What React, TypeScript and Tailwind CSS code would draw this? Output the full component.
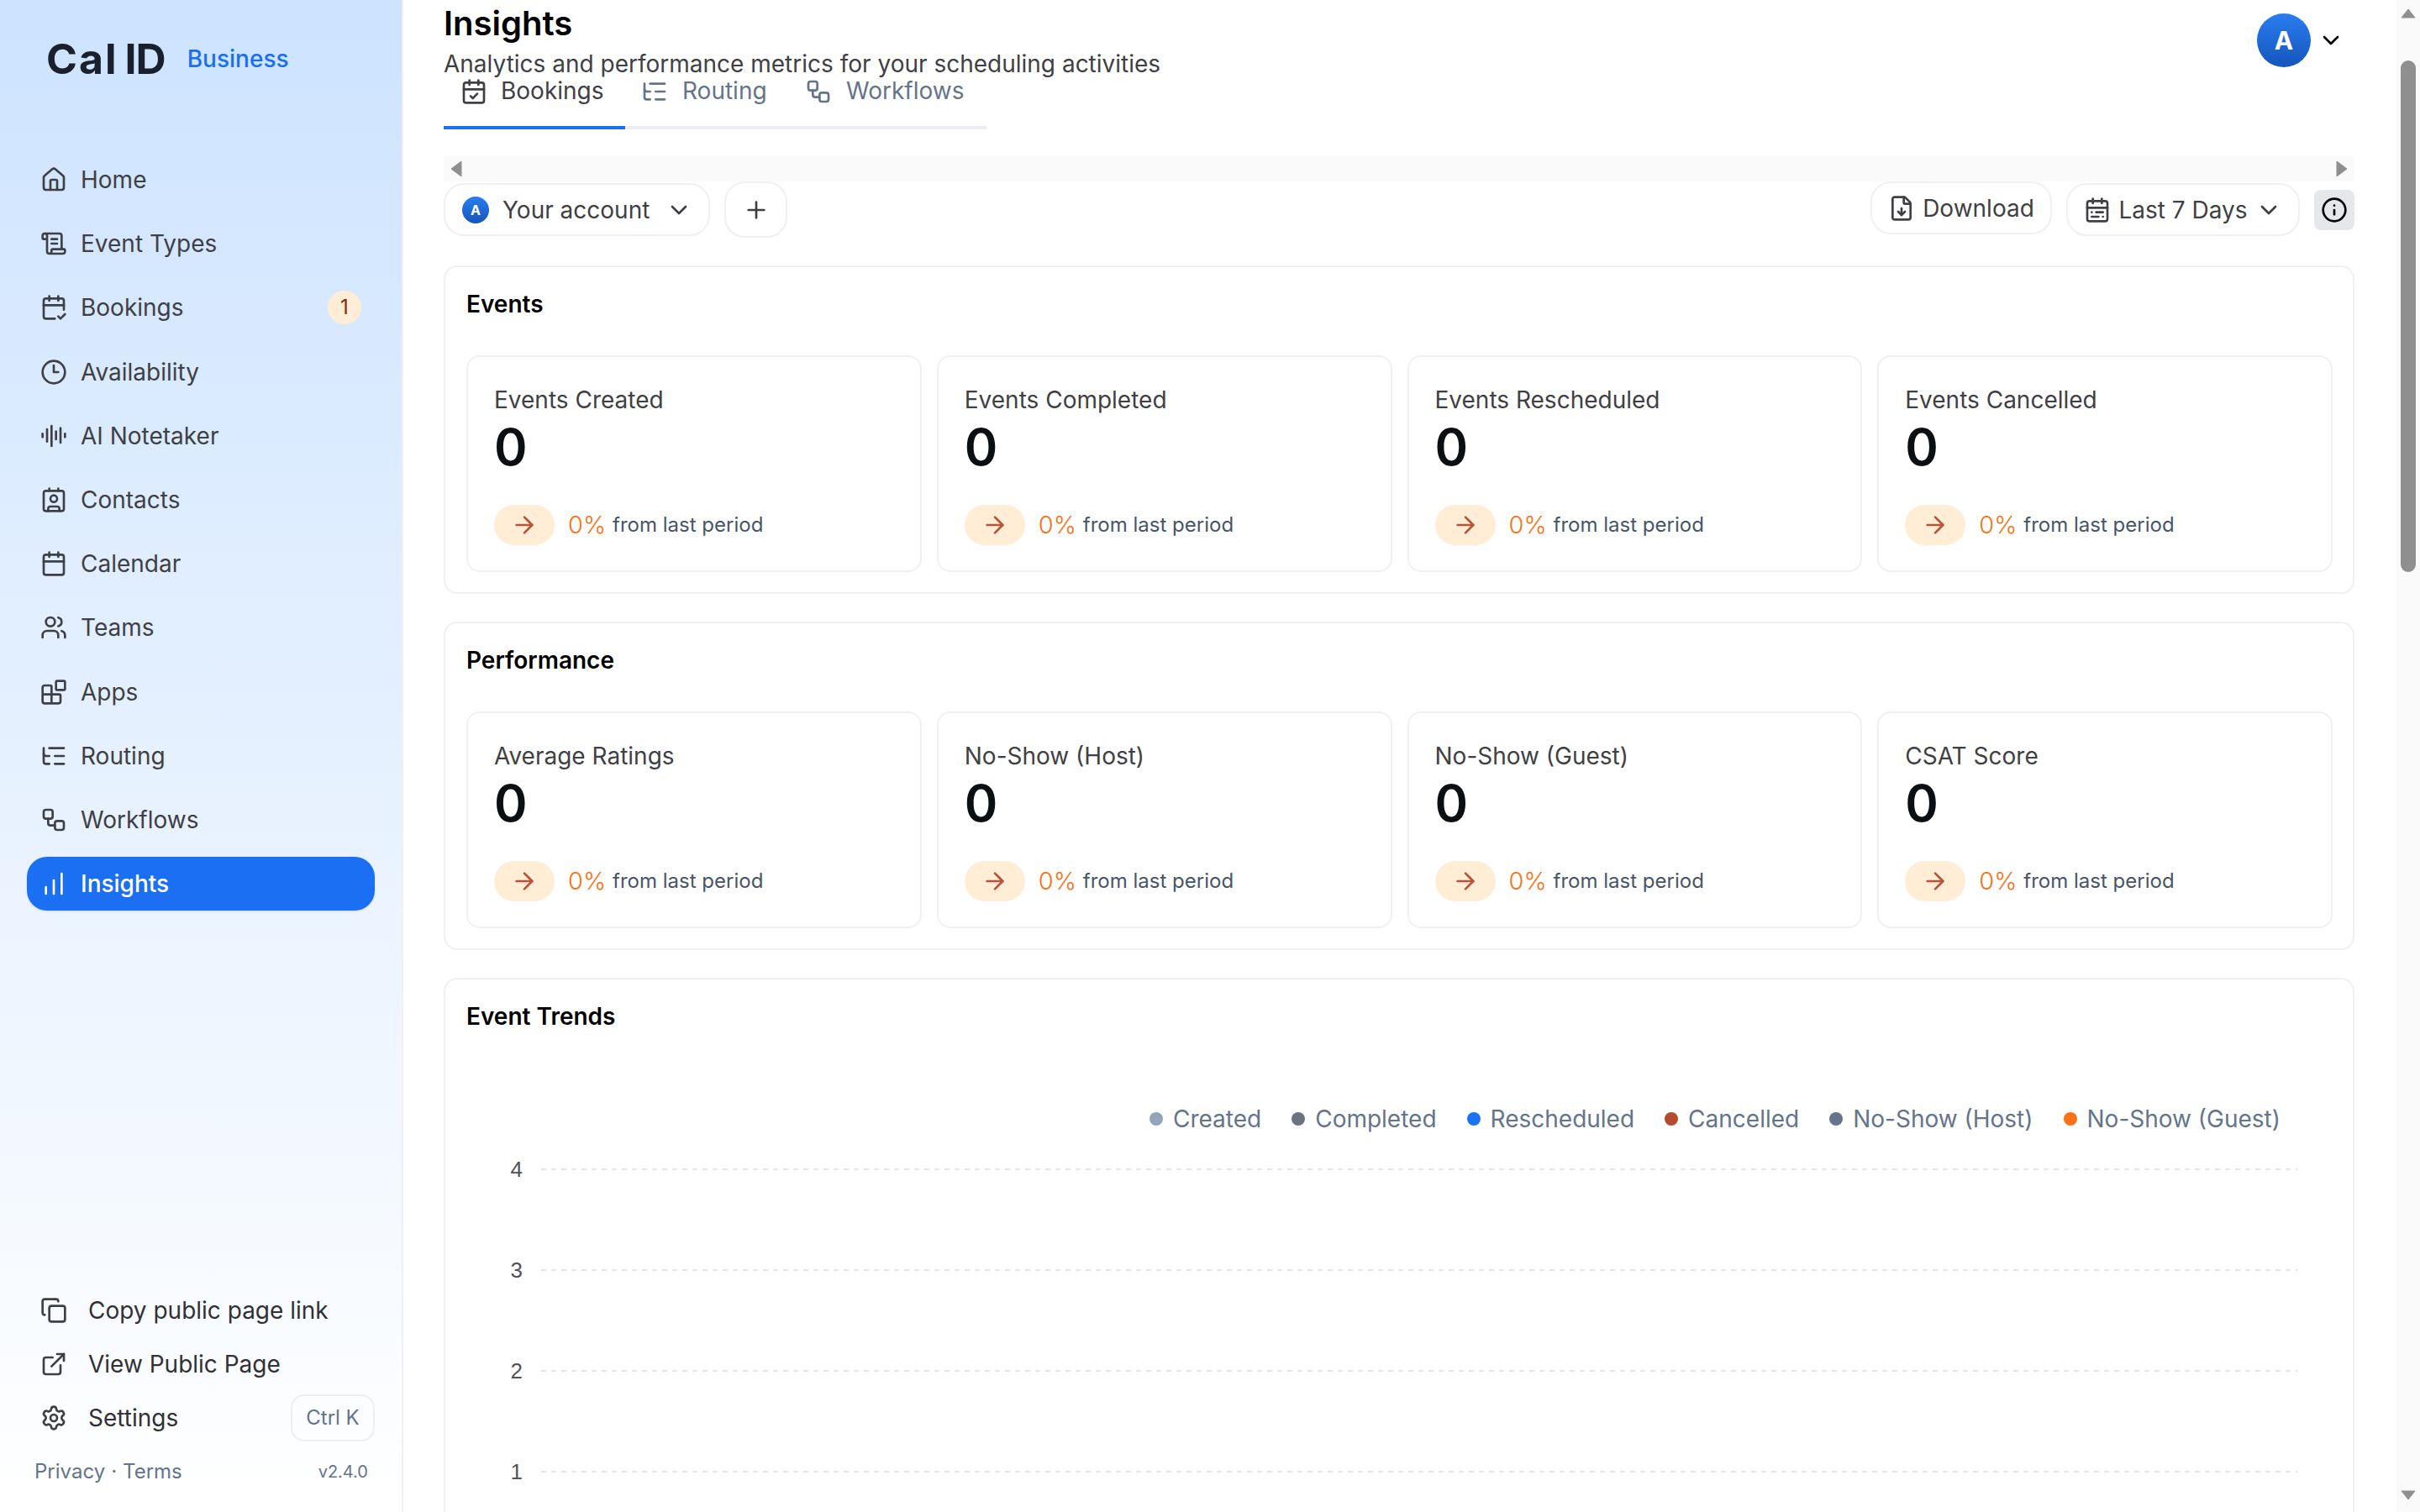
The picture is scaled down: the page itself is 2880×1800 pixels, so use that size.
import React from 'react';
import {
  ArrowRight,
  AudioLines,
  Blocks,
  Calendar,
  CalendarCheck,
  CalendarCheck2,
  CalendarRange,
  ChartNoAxesColumnIncreasing,
  ChevronDown,
  Clock3,
  Contact,
  Copy,
  ExternalLink,
  FileDown,
  House,
  Info,
  ListTree,
  Plus,
  ScrollText,
  Settings,
  Users,
  Workflow,
} from 'lucide-react';

const navItems = [
  { label: 'Home', icon: House },
  { label: 'Event Types', icon: ScrollText },
  { label: 'Bookings', icon: CalendarCheck2, badge: '1' },
  { label: 'Availability', icon: Clock3 },
  { label: 'AI Notetaker', icon: AudioLines },
  { label: 'Contacts', icon: Contact },
  { label: 'Calendar', icon: Calendar },
  { label: 'Teams', icon: Users },
  { label: 'Apps', icon: Blocks },
  { label: 'Routing', icon: ListTree },
  { label: 'Workflows', icon: Workflow },
];

const legend = [
  { label: 'Created', dot: 'bg-[#94a3b8]' },
  { label: 'Completed', dot: 'bg-[#6b7280]' },
  { label: 'Rescheduled', dot: 'bg-[#1a73f0]' },
  { label: 'Cancelled', dot: 'bg-[#b54a2d]' },
  { label: 'No-Show (Host)', dot: 'bg-[#64748b]' },
  { label: 'No-Show (Guest)', dot: 'bg-[#f97316]' },
];

function Sidebar() {
  return (
    <aside className="flex h-full w-[480px] shrink-0 flex-col border-r-2 border-[#eef0f4] bg-gradient-to-b from-[#cde3ff] to-white">
      <div className="flex h-[182px] shrink-0 items-start pl-[55px] pt-[45px]">
        <span className="flex text-[50px] leading-[50px] font-bold text-[#1a202c]">
          <span className="tracking-[2px]">Cal</span>
          <span className="ml-[8px] tracking-[-1px]">ID</span>
        </span>
        <span className="ml-[26px] mt-[8px] text-[28px] leading-[34px] font-medium text-[#1a6ff2]">Business</span>
      </div>
      <nav className="flex shrink-0 flex-col gap-[12.2px] px-[32px]">
        {navItems.map(item => (
          <a key={item.label} className="flex h-[64px] items-center gap-[16px] pl-[16px] pr-[16px] text-[28px] text-[#3f3f46]">
            <item.icon className="h-[32px] w-[32px] shrink-0" strokeWidth={2} />
            <span className="flex-1">{item.label}</span>
            {item.badge && (
              <span className="flex h-[40px] w-[40px] items-center justify-center rounded-full bg-[#ffedd5] text-[24px] text-[#7c2d12]">
                {item.badge}
              </span>
            )}
          </a>
        ))}
        <a className="flex h-[64px] items-center gap-[16px] rounded-[24px] bg-[#1a6ff2] pl-[16px] text-[28px] font-medium text-white shadow-sm">
          <ChartNoAxesColumnIncreasing className="h-[32px] w-[32px] shrink-0" strokeWidth={2} />
          <span>Insights</span>
        </a>
      </nav>
      <div className="mt-auto flex shrink-0 flex-col pl-[48px] pr-[32px] text-[28px] text-[#303036]">
        <a className="flex h-[64px] items-center gap-[25px]">
          <Copy className="h-[32px] w-[32px] text-[#3f3f46]" strokeWidth={2} />
          Copy public page link
        </a>
        <a className="flex h-[64px] items-center gap-[25px]">
          <ExternalLink className="h-[32px] w-[32px] text-[#3f3f46]" strokeWidth={2} />
          View Public Page
        </a>
        <a className="flex h-[64px] items-center gap-[25px]">
          <Settings className="h-[32px] w-[32px] text-[#3f3f46]" strokeWidth={2} />
          <span className="flex-1">Settings</span>
          <span className="flex h-[56px] w-[100px] items-center justify-center rounded-[16px] border-2 border-[#eceef2] text-[24px] text-[#64748b]">
            Ctrl K
          </span>
        </a>
      </div>
      <div className="flex h-[80px] shrink-0 items-start justify-between pl-[41px] pr-[40px] pt-[16px] text-[#64748b]">
        <span className="flex gap-[7px] text-[24px] leading-[32px]">
          <span>Privacy</span>
          <span>·</span>
          <span>Terms</span>
        </span>
        <span className="text-[20px] leading-[32px]">v2.4.0</span>
      </div>
    </aside>
  );
}

function StatCard({ label }: { label: string }) {
  return (
    <div className="h-[258px] rounded-[16px] border-2 border-[#eef0f4] pl-[31px] pt-[31px]">
      <div className="text-[28px] leading-[40px] text-[#3f3f46]">{label}</div>
      <div className="text-[60px] leading-[72px] font-semibold text-[#0a0f14]">0</div>
      <div className="mt-[32px] flex items-center">
        <span className="flex h-[48px] w-[72px] items-center justify-center rounded-[24px] bg-[#ffedd5]">
          <ArrowRight className="h-[32px] w-[32px] text-[#b8533a]" strokeWidth={2} />
        </span>
        <span className="ml-[16px] text-[29px] leading-[48px] font-light text-[#f97316]">0%</span>
        <span className="ml-[8px] text-[24px] leading-[50px] text-[#475569]">from last period</span>
      </div>
    </div>
  );
}

function StatSection({ title, cards }: { title: string; cards: string[] }) {
  return (
    <section className="shrink-0 rounded-[16px] border-2 border-[#eef0f4] pb-[24px] pl-[25px] pr-[24px] pt-[24px]">
      <h2 className="mb-[41px] text-[28px] leading-[40px] font-semibold text-black">{title}</h2>
      <div className="grid grid-cols-4 gap-[18px]">
        {cards.map(c => (
          <StatCard key={c} label={c} />
        ))}
      </div>
    </section>
  );
}

function TrendChart() {
  return (
    <svg className="block h-[430px] w-[2221px]" viewBox="0 0 2221 430">
      {[4, 3, 2, 1].map((n, i) => (
        <g key={n}>
          <text x="67" y={40 + i * 120 + 9} textAnchor="end" fontFamily="Liberation Sans" fontSize="26" fill="#52525b">
            {n}
          </text>
          <line x1="89" x2="2179" y1={40 + i * 120} y2={40 + i * 120} stroke="#e5e7eb" strokeWidth="2" strokeDasharray="6 6" />
        </g>
      ))}
    </svg>
  );
}

function Scrollbar() {
  return (
    <div className="flex h-full w-[28px] shrink-0 flex-col items-center bg-[#fafafa] pt-[10px]">
      <svg width="18" height="12" viewBox="0 0 18 12">
        <path d="M9 1 L17 11 H1 Z" fill="#8f8f8f" stroke="#8f8f8f" strokeLinejoin="round" />
      </svg>
      <div className="mt-[50px] h-[609px] w-[18px] rounded-[9px] bg-[#8f8f8f]" />
      <svg className="mb-[14px] mt-auto" width="18" height="12" viewBox="0 0 18 12">
        <path d="M1 1 H17 L9 11 Z" fill="#8f8f8f" stroke="#8f8f8f" strokeLinejoin="round" />
      </svg>
    </div>
  );
}

export default function App() {
  return (
    <div className="flex h-[1800px] w-[2880px] overflow-hidden bg-white font-[Inter,sans-serif]">
      <Sidebar />
      <main className="flex min-w-0 flex-1 flex-col overflow-hidden pl-[48px] pr-[50px]">
        <header className="flex h-[88px] shrink-0 items-start justify-between">
          <div>
            <h1 className="text-[40px] leading-[56px] font-semibold text-black">Insights</h1>
            <p className="text-[28px] leading-[40px] text-[#3f3f46]">Analytics and performance metrics for your scheduling activities</p>
          </div>
          <div className="mr-[12px] mt-[16px] flex items-center gap-[8px]">
            <span className="flex h-[64px] w-[64px] items-center justify-center rounded-full bg-gradient-to-b from-[#2a7df0] to-[#1456bb] text-[30px] font-bold text-white">
              A
            </span>
            <ChevronDown className="h-[32px] w-[32px] text-black" strokeWidth={2} />
          </div>
        </header>

        <div className="flex h-[66px] w-[646px] shrink-0 border-b-4 border-[#eceef2] text-[28px] leading-[40px] text-[#64748b]">
          <div className="-mb-[4px] flex h-[66px] w-[216px] items-start gap-[16px] border-b-4 border-[#1a6ff2] pl-[20px] text-[#3f3f46]">
            <CalendarCheck className="mt-[5px] h-[32px] w-[32px]" strokeWidth={2} />
            Bookings
          </div>
          <div className="flex w-[194px] items-start gap-[17px] pl-[19px]">
            <ListTree className="mt-[5px] h-[32px] w-[32px]" strokeWidth={2} />
            Routing
          </div>
          <div className="flex items-start gap-[17px] pl-[20px]">
            <Workflow className="mt-[5px] h-[32px] w-[32px]" strokeWidth={2} />
            Workflows
          </div>
        </div>

        <div className="mt-[32px] flex h-[30px] shrink-0 items-center justify-between bg-[#fafafa] px-[8px]">
          <svg width="14" height="20" viewBox="0 0 14 20"><path d="M13 1 V19 L1 10 Z" fill="#8f8f8f" stroke="#8f8f8f" strokeLinejoin="round" /></svg>
          <svg width="14" height="20" viewBox="0 0 14 20"><path d="M1 1 V19 L13 10 Z" fill="#8f8f8f" stroke="#8f8f8f" strokeLinejoin="round" /></svg>
        </div>

        <div className="flex h-[67px] shrink-0 items-center justify-between text-[28px] text-[#3f3f46]">
          <div className="flex items-center gap-[17px]">
            <button className="flex h-[63px] w-[317px] items-center rounded-[24px] border-2 border-[#eef0f4] pl-[20px]">
              <span className="flex h-[32px] w-[32px] items-center justify-center rounded-full bg-gradient-to-b from-[#2a7df0] to-[#1456bb] text-[16px] font-bold text-white">
                A
              </span>
              <span className="ml-[16px]">Your account</span>
              <ChevronDown className="ml-[19px] h-[32px] w-[32px]" strokeWidth={2} />
            </button>
            <button className="flex h-[67px] w-[75px] items-center justify-center rounded-[24px] border-2 border-[#eef0f4]">
              <Plus className="h-[32px] w-[32px]" strokeWidth={2} />
            </button>
          </div>
          <div className="flex items-center gap-[17px]">
            <button className="mb-[4px] flex h-[63px] w-[216px] items-center justify-center gap-[9px] rounded-[24px] border-2 border-[#eef0f4]">
              <FileDown className="h-[32px] w-[32px]" strokeWidth={2} />
              Download
            </button>
            <button className="flex h-[63px] w-[278px] items-center justify-center gap-[9px] rounded-[24px] border-2 border-[#eef0f4]">
              <CalendarRange className="h-[32px] w-[32px]" strokeWidth={2} />
              Last 7 Days
              <ChevronDown className="h-[32px] w-[32px]" strokeWidth={2} />
            </button>
            <button className="flex h-[48px] w-[48px] items-center justify-center rounded-[8px] bg-[#e5e7eb]">
              <Info className="h-[32px] w-[32px] text-black" strokeWidth={2} />
            </button>
          </div>
        </div>

        <div className="mt-[33px] flex shrink-0 flex-col gap-[33px]">
          <StatSection title="Events" cards={['Events Created', 'Events Completed', 'Events Rescheduled', 'Events Cancelled']} />
          <StatSection title="Performance" cards={['Average Ratings', 'No-Show (Host)', 'No-Show (Guest)', 'CSAT Score']} />
          <section className="h-[700px] shrink-0 rounded-[16px] border-2 border-[#eef0f4] pl-[25px] pr-[24px] pt-[24px]">
            <h2 className="text-[28px] leading-[40px] font-semibold text-black">Event Trends</h2>
            <div className="mt-[82px] flex items-center justify-end gap-[36px] pr-[62px] text-[28px] leading-[40px] text-[#64748b]">
              {legend.map(l => (
                <span key={l.label} className="flex items-center gap-[12px]">
                  <span className={`h-[16px] w-[16px] rounded-full ${l.dot}`} />
                  {l.label}
                </span>
              ))}
            </div>
            <TrendChart />
          </section>
        </div>
      </main>
      <Scrollbar />
    </div>
  );
}
